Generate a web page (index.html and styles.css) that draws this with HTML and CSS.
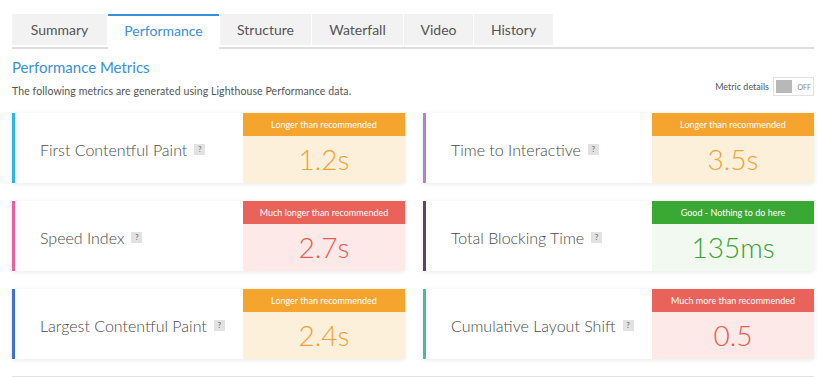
FILE: index.html
```html
<!DOCTYPE html>
<html lang="en">
<head>
    <meta charset="UTF-8">
    <title>Performance</title>
    <link rel="stylesheet" href="styles.css">
</head>
<body>
    <div class="page">
        <ul class="tabs">
            <li>Summary</li>
            <li class="active">Performance</li>
            <li>Structure</li>
            <li>Waterfall</li>
            <li>Video</li>
            <li>History</li>
        </ul>
        <h2 class="title">Performance Metrics</h2>
        <div class="intro">
            <p>The following metrics are generated using Lighthouse Performance data.</p>
            <div class="toggle">
                <span>Metric details</span>
                <span class="switch"><span class="knob"></span><span class="off">OFF</span></span>
            </div>
        </div>
        <div class="metrics">
            <div class="card fcp">
                <div class="name">First Contentful Paint <span class="help">?</span></div>
                <div class="score warn">
                    <div class="label">Longer than recommended</div>
                    <div class="value">1.2s</div>
                </div>
            </div>
            <div class="card tti">
                <div class="name">Time to Interactive <span class="help">?</span></div>
                <div class="score warn">
                    <div class="label">Longer than recommended</div>
                    <div class="value">3.5s</div>
                </div>
            </div>
            <div class="card si">
                <div class="name">Speed Index <span class="help">?</span></div>
                <div class="score bad">
                    <div class="label">Much longer than recommended</div>
                    <div class="value">2.7s</div>
                </div>
            </div>
            <div class="card tbt">
                <div class="name">Total Blocking Time <span class="help">?</span></div>
                <div class="score good">
                    <div class="label">Good - Nothing to do here</div>
                    <div class="value">135ms</div>
                </div>
            </div>
            <div class="card lcp">
                <div class="name">Largest Contentful Paint <span class="help">?</span></div>
                <div class="score warn">
                    <div class="label">Longer than recommended</div>
                    <div class="value">2.4s</div>
                </div>
            </div>
            <div class="card cls">
                <div class="name">Cumulative Layout Shift <span class="help">?</span></div>
                <div class="score bad">
                    <div class="label">Much more than recommended</div>
                    <div class="value">0.5</div>
                </div>
            </div>
        </div>
        <div class="rule"></div>
    </div>
</body>
</html>
```

FILE: styles.css
```css
html, body {
    margin: 0;
    background: white;
    font-family: Lato, "Open Sans", sans-serif;
    color: #444;
}
.page {
    width: 802px;
    margin-left: 12px;
    padding-top: 14px;
}
.tabs {
    display: flex;
    gap: 1px;
    margin: 0;
    padding: 0;
    list-style: none;
    border-bottom: 2px solid #dedede;
}
.tabs li {
    height: 31px;
    line-height: 31px;
    text-align: center;
    background: #f2f2f2;
    font-size: 14px;
    color: #555;
}
.tabs li:nth-child(1) { width: 95px; }
.tabs li:nth-child(2) { width: 111px; }
.tabs li:nth-child(3) { width: 91px; }
.tabs li:nth-child(4) { width: 91px; }
.tabs li:nth-child(5) { width: 69px; }
.tabs li:nth-child(6) { width: 79px; }
.tabs li.active {
    background: white;
    color: #3a8fd8;
    border-top: 2px solid #3a8fd8;
    line-height: 29px;
    margin-bottom: -2px;
    height: 33px;
}
.title {
    margin: 9px 0 0;
    font-size: 15px;
    font-weight: normal;
    color: #3a8fd8;
    line-height: 18px;
}
.intro {
    display: flex;
    justify-content: space-between;
    align-items: flex-start;
    height: 37px;
}
.intro p {
    margin: 9px 0 0;
    font-size: 10.5px;
    letter-spacing: 0.1px;
    color: #555;
}
.toggle {
    display: flex;
    align-items: center;
    gap: 4px;
    font-size: 9px;
    color: #555;
    margin-top: 1px;
}
.switch {
    display: flex;
    align-items: center;
    width: 41px;
    height: 19px;
    border: 1px solid #e2e2e2;
    box-sizing: border-box;
    padding: 2px;
    gap: 5px;
}
.knob {
    width: 17px;
    height: 13px;
    background: #b8b8b8;
}
.off {
    font-size: 7px;
    color: #888;
}
.metrics {
    display: grid;
    grid-template-columns: 393px 391px;
    column-gap: 18px;
    row-gap: 18px;
}
.card {
    display: flex;
    height: 70px;
    border-left: 3px solid #2bb5ea;
    box-shadow: 0 1px 5px rgba(0, 0, 0, 0.09);
    background: white;
}
.card.tti { border-color: #b27ed8; }
.card.si { border-color: #ec5f9e; }
.card.tbt { border-color: #5d4274; }
.card.lcp { border-color: #3e6fd6; }
.card.cls { border-color: #44bf98; }
.name {
    flex: 1;
    display: flex;
    align-items: center;
    gap: 7px;
    padding-left: 25px;
    padding-top: 3px;
    font-size: 16px;
    font-weight: 300;
    color: #4a4a4a;
}
.help {
    display: inline-block;
    width: 11px;
    height: 11px;
    line-height: 11px;
    text-align: center;
    font-size: 7px;
    font-weight: bold;
    background: #e2e2e2;
    color: #777;
}
.score {
    width: 162px;
    display: flex;
    flex-direction: column;
}
.label {
    height: 23px;
    line-height: 23px;
    text-align: center;
    font-size: 9px;
    color: white;
}
.value {
    flex: 1;
    display: flex;
    align-items: center;
    justify-content: center;
    font-size: 28px;
    font-weight: 300;
    padding-bottom: 2px;
}
.warn .label { background: #f5a52e; }
.warn .value { background: #fdf0db; color: #f0a035; }
.bad .label { background: #e9635b; }
.bad .value { background: #fde9e7; color: #e45c55; }
.good .label { background: #3aa934; }
.good .value { background: #f1f9f0; color: #36a232; }
.rule {
    margin-top: 17px;
    border-top: 1px solid #e2e2e2;
}
```
